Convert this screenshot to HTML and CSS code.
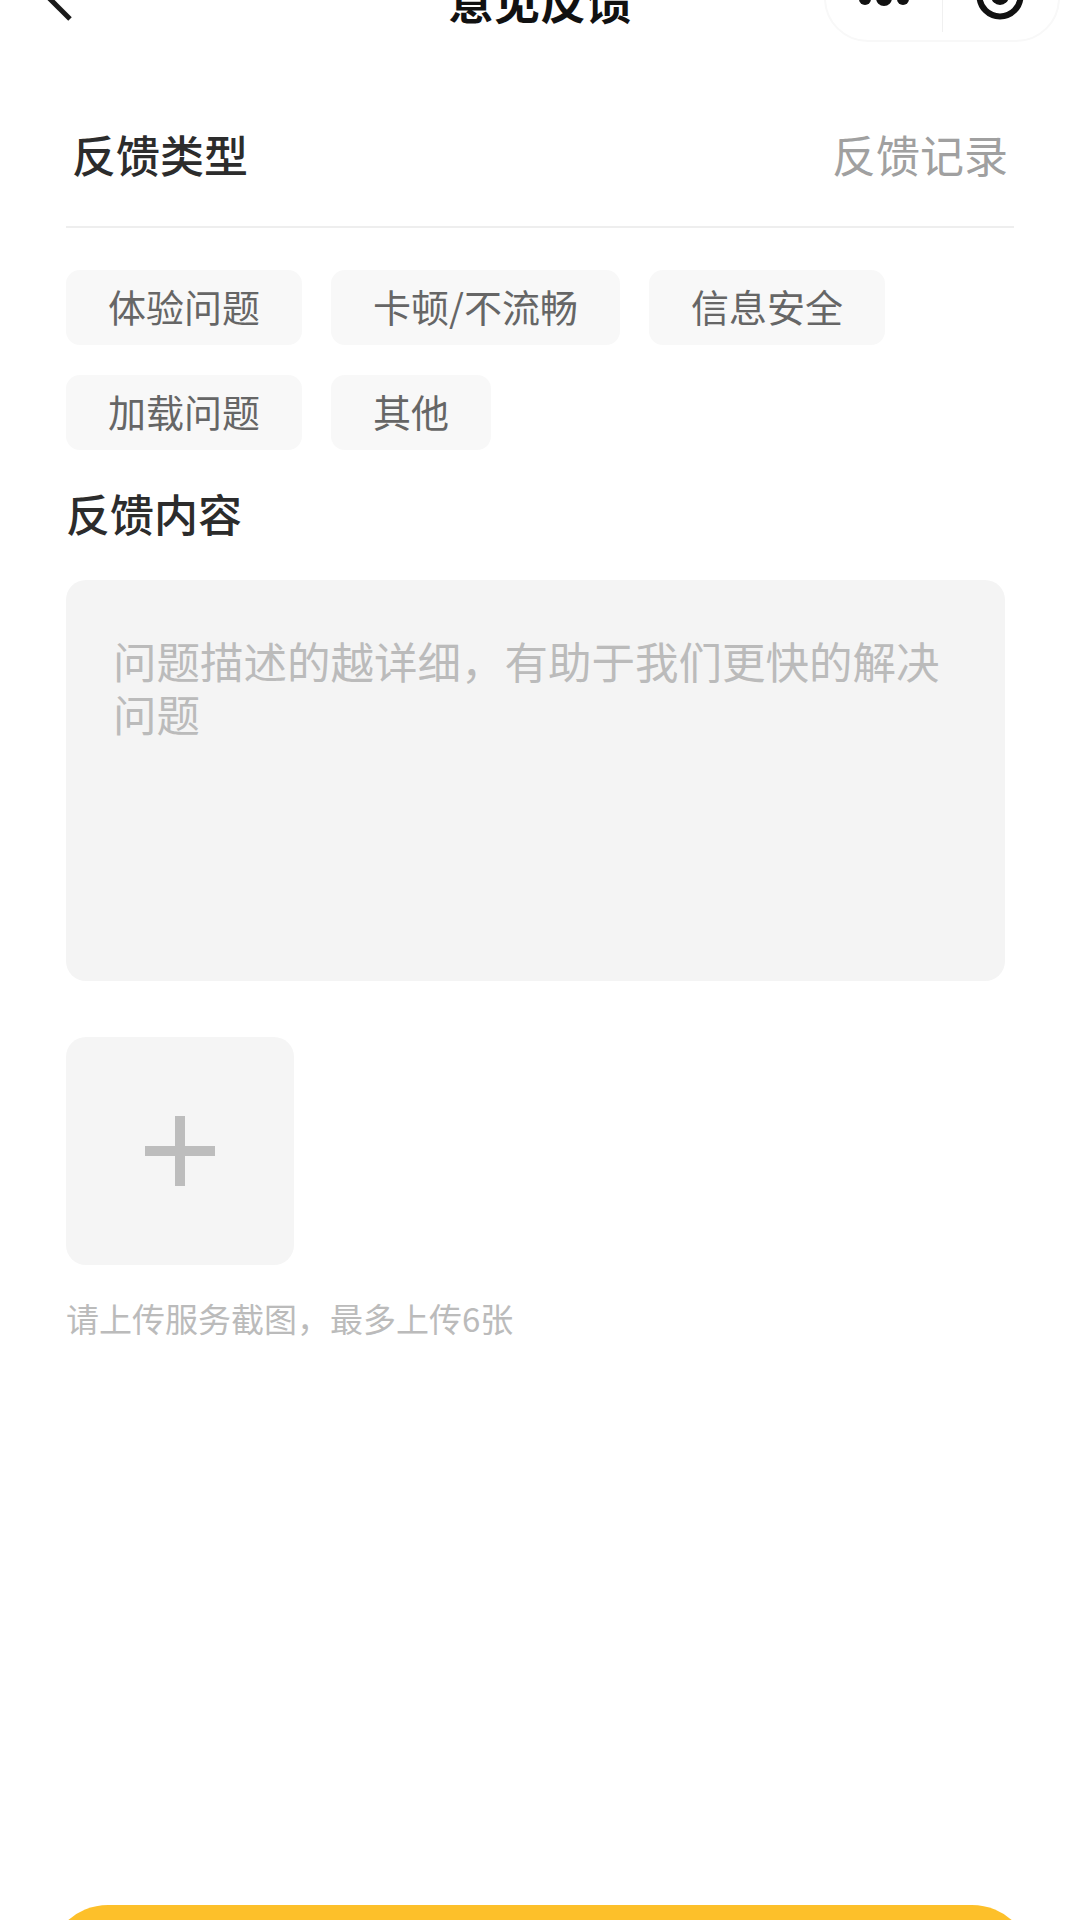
FILE: index.html
```html
<!DOCTYPE html>
<html lang="zh-CN">
<head>
  <meta charset="UTF-8">
  <meta name="viewport" content="width=device-width, initial-scale=1.0">
  <title>意见反馈</title>
  <link rel="stylesheet" href="styles.css">
</head>
<body>
  <div class="page">
    <!-- 顶部导航 -->
    <header class="nav">
      <svg class="nav-back" width="30" height="42" viewBox="0 0 30 42">
        <path d="M1 -3 L23 19" fill="none" stroke="#1a1a1a" stroke-width="5"/>
      </svg>
      <div class="nav-title">意见反馈</div>
      <div class="capsule">
        <div class="capsule-part capsule-more">
          <svg width="50" height="12" viewBox="0 0 50 12">
            <circle cx="6" cy="-1" r="6" fill="#111"/>
            <circle cx="25" cy="-2" r="8" fill="#111"/>
            <circle cx="44" cy="-1" r="6" fill="#111"/>
          </svg>
        </div>
        <div class="capsule-line"></div>
        <div class="capsule-part capsule-close">
          <svg width="48" height="30" viewBox="0 0 48 30">
            <circle cx="24" cy="6" r="20.5" fill="none" stroke="#111" stroke-width="6"/>
            <circle cx="24" cy="6" r="9" fill="#111"/>
          </svg>
        </div>
      </div>
    </header>

    <main class="content">
      <!-- 反馈类型 -->
      <div class="type-head">
        <div class="heading">反馈类型</div>
        <div class="record-link">反馈记录</div>
      </div>

      <div class="tags">
        <div class="tag">体验问题</div>
        <div class="tag">卡顿/不流畅</div>
        <div class="tag">信息安全</div>
        <div class="tag">加载问题</div>
        <div class="tag">其他</div>
      </div>

      <!-- 反馈内容 -->
      <div class="heading content-title">反馈内容</div>
      <div class="textbox">问题描述的越详细，有助于我们更快的解决问题</div>

      <!-- 上传 -->
      <div class="upload">
        <div class="plus"></div>
      </div>
      <div class="hint">请上传服务截图，最多上传6张</div>
    </main>

    <!-- 提交按钮，只露出顶部 -->
    <footer class="foot">
      <div class="submit"></div>
    </footer>
  </div>
</body>
</html>
```

FILE: styles.css
```css
/* Estilo geral */
html, body {
  margin: 0;
  padding: 0;
  background: #fff;
}

body {
  font-family: "Noto Sans CJK SC", "Noto Sans", sans-serif;
  color: #333;
}

.page {
  width: 1080px;
  height: 1920px;
  display: flex;
  flex-direction: column;
  overflow: hidden;
}

/* Navegação */
.nav {
  height: 42px;
  flex-shrink: 0;
  display: grid;
  grid-template-columns: 1fr auto 1fr;
  grid-template-rows: 42px;
  align-items: end;
  overflow: hidden;
}

.nav-back {
  display: block;
  margin-left: 47px;
  align-self: start;
}

.nav-title {
  font-size: 46px;
  line-height: 46px;
  font-weight: 700;
  color: #111;
  margin-bottom: 20px;
}

.capsule {
  justify-self: end;
  box-sizing: border-box;
  width: 236px;
  height: 90px;
  margin-right: 20px;
  display: flex;
  align-items: flex-end;
  background: #fff;
  border: 2px solid #f8f8f8;
  border-radius: 44px;
}

.capsule-part {
  flex: 1;
  display: flex;
  justify-content: center;
}

.capsule-part svg {
  display: block;
}

.capsule-more {
  padding-bottom: 28px;
}

.capsule-close {
  padding-bottom: 20px;
}

.capsule-line {
  width: 1px;
  height: 75px;
  margin-bottom: 8px;
  background: #f0f0f0;
}

/* Conteúdo */
.content {
  flex: 1;
  padding: 0 66px;
}

.type-head {
  height: 186px;
  padding: 40px 6px 0;
  display: flex;
  justify-content: space-between;
  align-items: center;
  border-bottom: 2px solid #eeeeee;
  box-sizing: border-box;
}

.heading {
  font-size: 44px;
  line-height: 60px;
  font-weight: 500;
  color: #2c2c2c;
}

.record-link {
  font-size: 44px;
  line-height: 60px;
  color: #a0a0a0;
}

.tags {
  display: flex;
  flex-wrap: wrap;
  gap: 30px 29px;
  width: 900px;
  margin-top: 42px;
}

.tag {
  height: 75px;
  line-height: 72px;
  padding: 0 42px;
  font-size: 38px;
  color: #666;
  background: #f8f8f8;
  border-radius: 14px;
}

.content-title {
  margin-top: 33px;
}

.textbox {
  box-sizing: border-box;
  width: 939px;
  height: 401px;
  margin-top: 37px;
  padding: 54px 47px 0;
  font-size: 43.5px;
  line-height: 53px;
  color: #bbb;
  background: #f4f4f4;
  border-radius: 20px;
}

.upload {
  width: 228px;
  height: 228px;
  margin-top: 56px;
  display: flex;
  align-items: center;
  justify-content: center;
  background: #f5f5f5;
  border-radius: 20px;
}

.plus {
  width: 70px;
  height: 70px;
  background:
    linear-gradient(#bdbdbd, #bdbdbd) center / 70px 10px no-repeat,
    linear-gradient(#bdbdbd, #bdbdbd) center / 10px 70px no-repeat;
}

.hint {
  margin-top: 30px;
  font-size: 33px;
  line-height: 46px;
  color: #bbb;
}

/* Botão */
.foot {
  height: 15px;
  flex-shrink: 0;
  padding: 0 48px;
  overflow: hidden;
}

.submit {
  height: 120px;
  background: #fdc02a;
  border-radius: 60px;
}
```
